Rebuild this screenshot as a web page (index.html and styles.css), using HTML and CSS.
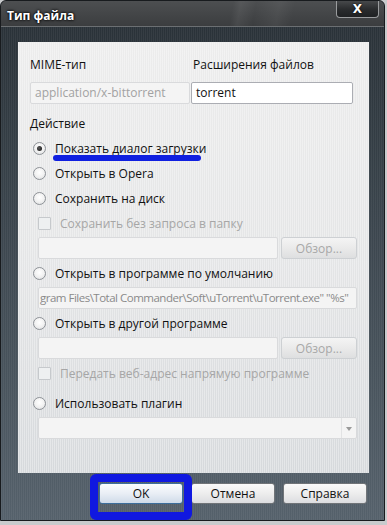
FILE: index.html
```html
<!DOCTYPE html>
<html lang="ru">
<head>
  <meta charset="UTF-8">
  <title>Тип файла</title>
  <link rel="stylesheet" href="styles.css">
</head>
<body>
  <div class="window">
    <div class="titlebar">
      <span class="title">Тип файла</span>
      <button class="close-btn">X</button>
    </div>

    <div class="frame">
      <div class="panel">
        <div class="fields">
          <div class="field mime">
            <div class="label">MIME-тип</div>
            <div class="textbox disabled">application/x-bittorrent</div>
          </div>
          <div class="field ext">
            <div class="label">Расширения файлов</div>
            <div class="textbox">torrent</div>
          </div>
        </div>

        <div class="section-title">Действие</div>

        <div class="options">
          <div class="option"><span class="radio checked"></span><span class="marked">Показать диалог загрузки</span></div>
          <div class="option"><span class="radio"></span>Открыть в Opera</div>
          <div class="option"><span class="radio"></span>Сохранить на диск</div>
          <div class="option sub disabled"><span class="check"></span>Сохранить без запроса в папку</div>
          <div class="path-row">
            <div class="textbox disabled"></div>
            <button class="browse-btn" disabled>Обзор...</button>
          </div>
          <div class="option"><span class="radio"></span>Открыть в программе по умолчанию</div>
          <div class="path-row">
            <div class="textbox disabled path">gram Files\Total Commander\Soft\uTorrent\uTorrent.exe" "%s"</div>
          </div>
          <div class="option"><span class="radio"></span>Открыть в другой программе</div>
          <div class="path-row">
            <div class="textbox disabled"></div>
            <button class="browse-btn" disabled>Обзор...</button>
          </div>
          <div class="option sub disabled"><span class="check"></span>Передать веб-адрес напрямую программе</div>
          <div class="option plugin"><span class="radio"></span>Использовать плагин</div>
          <div class="path-row">
            <div class="textbox disabled select"><span class="arrow"></span></div>
          </div>
        </div>
      </div>

      <div class="buttons">
        <button class="btn ok">OK<span class="highlight"></span></button>
        <button class="btn">Отмена</button>
        <button class="btn">Справка</button>
      </div>
    </div>
  </div>
</body>
</html>
```

FILE: styles.css
```css
body {
  margin: 0;
  background: #c9cbcd;
  font-family: 'Open Sans', 'Noto Sans', sans-serif;
  font-size: 12px;
  color: #111;
}

.window {
  width: 385px;
  height: 521px;
  box-sizing: border-box;
  border: 1px solid #181b1e;
  border-radius: 6px 6px 0 0;
  overflow: hidden;
  background:
    repeating-linear-gradient(90deg, rgba(255,255,255,0.05) 0 1px, transparent 1px 2px),
    linear-gradient(180deg, #283036 0%, #3a444c 40%, #55616b 100%);
}

.titlebar {
  height: 25px;
  display: flex;
  justify-content: space-between;
  align-items: flex-start;
  border-bottom: 1px solid #6b6f72;
  background:
    linear-gradient(100deg, transparent 60%, rgba(255,255,255,0.06) 62%, transparent 66%, rgba(255,255,255,0.05) 72%, transparent 76%),
    linear-gradient(180deg, #4d4f51 0%, #3b3d3f 100%);
}

.title {
  padding: 6px 0 0 6px;
  color: #fff;
  font-weight: bold;
  font-size: 12px;
  text-shadow: 0 0 3px #000, 0 0 2px #000;
}

.close-btn {
  width: 43px;
  height: 18px;
  margin: -1px 5px 0 0;
  border: 1px solid #9a9c9e;
  border-top: none;
  border-radius: 0 0 4px 4px;
  background: linear-gradient(180deg, #4a4c4e 0%, #2a2c2e 55%, #1f2123 100%);
  color: #fff;
  font-family: 'DejaVu Sans', sans-serif;
  font-weight: bold;
  font-size: 12px;
  line-height: 16px;
  padding: 0;
  text-shadow: 0 0 2px #000;
}

.frame {
  padding: 15px 15px 0 17px;
}

.panel {
  height: 431px;
  box-sizing: border-box;
  padding: 15px 12px 0 12px;
  background:
    repeating-linear-gradient(90deg, rgba(255,255,255,0.35) 0 1px, transparent 1px 2px),
    linear-gradient(180deg, #ececec 0%, #e4e5e6 50%, #d6d9dc 100%);
}

.fields {
  display: flex;
  gap: 1px;
}

.field.mime { width: 160px; }
.field.ext { width: 162px; }

.label {
  height: 16px;
  line-height: 16px;
  margin-bottom: 9px;
}

.field.ext .label { padding-left: 2px; }

.textbox {
  height: 22px;
  box-sizing: border-box;
  border: 1px solid #abadb3;
  border-radius: 2px;
  background: #fff;
  padding: 0 4px;
  line-height: 20px;
  white-space: nowrap;
  overflow: hidden;
}

.textbox.disabled {
  border-color: #d9dadc;
  background: #f4f4f4;
  color: #a2a2a2;
}

.section-title {
  height: 16px;
  line-height: 16px;
  margin-top: 12px;
}

.options {
  margin-top: 4px;
  display: flex;
  flex-direction: column;
  gap: 1px;
}

.option {
  height: 24px;
  display: flex;
  align-items: center;
  padding-left: 3px;
}

.option.sub { padding-left: 8px; }
.option.plugin { margin-top: 5px; }
.option.disabled { color: #a6a6a6; }

.radio {
  width: 13px;
  height: 13px;
  box-sizing: border-box;
  border: 1px solid #8e9297;
  border-radius: 50%;
  background: radial-gradient(circle at 50% 40%, #ffffff 0%, #f2f2f2 50%, #d8dadc 100%);
  margin-right: 9px;
  position: relative;
  flex: none;
}

.radio.checked::after {
  content: '';
  position: absolute;
  left: 3px;
  top: 3px;
  width: 5px;
  height: 5px;
  border-radius: 50%;
  background: radial-gradient(circle at 40% 40%, #5a5a5a, #111);
}

.check {
  width: 13px;
  height: 13px;
  box-sizing: border-box;
  border: 1px solid #c6c9cc;
  border-radius: 1px;
  background: #eef0f1;
  margin-right: 9px;
  flex: none;
}

.marked { position: relative; }

.marked::after {
  content: '';
  position: absolute;
  left: -2px;
  top: 15px;
  width: 148px;
  height: 6px;
  border-radius: 3px;
  background: #1020e0;
}

.path-row {
  display: flex;
  gap: 3px;
  margin: 1px 0 1px 8px;
}

.path-row .textbox { width: 240px; }
.path-row .textbox.path,
.path-row .textbox.select { width: 319px; }

.textbox.path {
  padding: 0 2px 0 1px;
  color: #8a8a8a;
  font-size: 11.5px;
  letter-spacing: -0.5px;
}

.textbox.select { position: relative; }

.arrow {
  position: absolute;
  right: 0;
  top: 0;
  bottom: 0;
  width: 14px;
  border-left: 1px solid #e2e3e4;
}

.arrow::after {
  content: '';
  position: absolute;
  left: 4px;
  top: 9px;
  border-left: 3px solid transparent;
  border-right: 3px solid transparent;
  border-top: 4px solid #9a9a9a;
}

.browse-btn {
  width: 76px;
  height: 22px;
  border: 1px solid #cdd0d3;
  border-radius: 3px;
  background: linear-gradient(180deg, #f4f4f4 0%, #eaeaea 50%, #dedfe0 100%);
  color: #a8a8a8;
  font-family: inherit;
  font-size: 12px;
  padding: 0;
}

.buttons {
  display: flex;
  justify-content: flex-end;
  gap: 8px;
  margin: 10px 2px 0 0;
}

.btn {
  width: 84px;
  height: 21px;
  border: 1px solid #707478;
  border-radius: 3px;
  background: linear-gradient(180deg, #fafafa 0%, #ededed 50%, #dcdde0 100%);
  font-family: inherit;
  font-size: 12px;
  color: #111;
  padding: 0;
}

.btn.ok {
  position: relative;
  border-color: #3c6e9c;
  background: linear-gradient(180deg, #fbfcfe 0%, #e9eef5 50%, #cfdbe9 100%);
}

.highlight {
  position: absolute;
  left: -10px;
  top: -10px;
  width: 102px;
  height: 46px;
  box-sizing: border-box;
  border: 8px solid #1018e0;
  border-radius: 6px;
}
```
